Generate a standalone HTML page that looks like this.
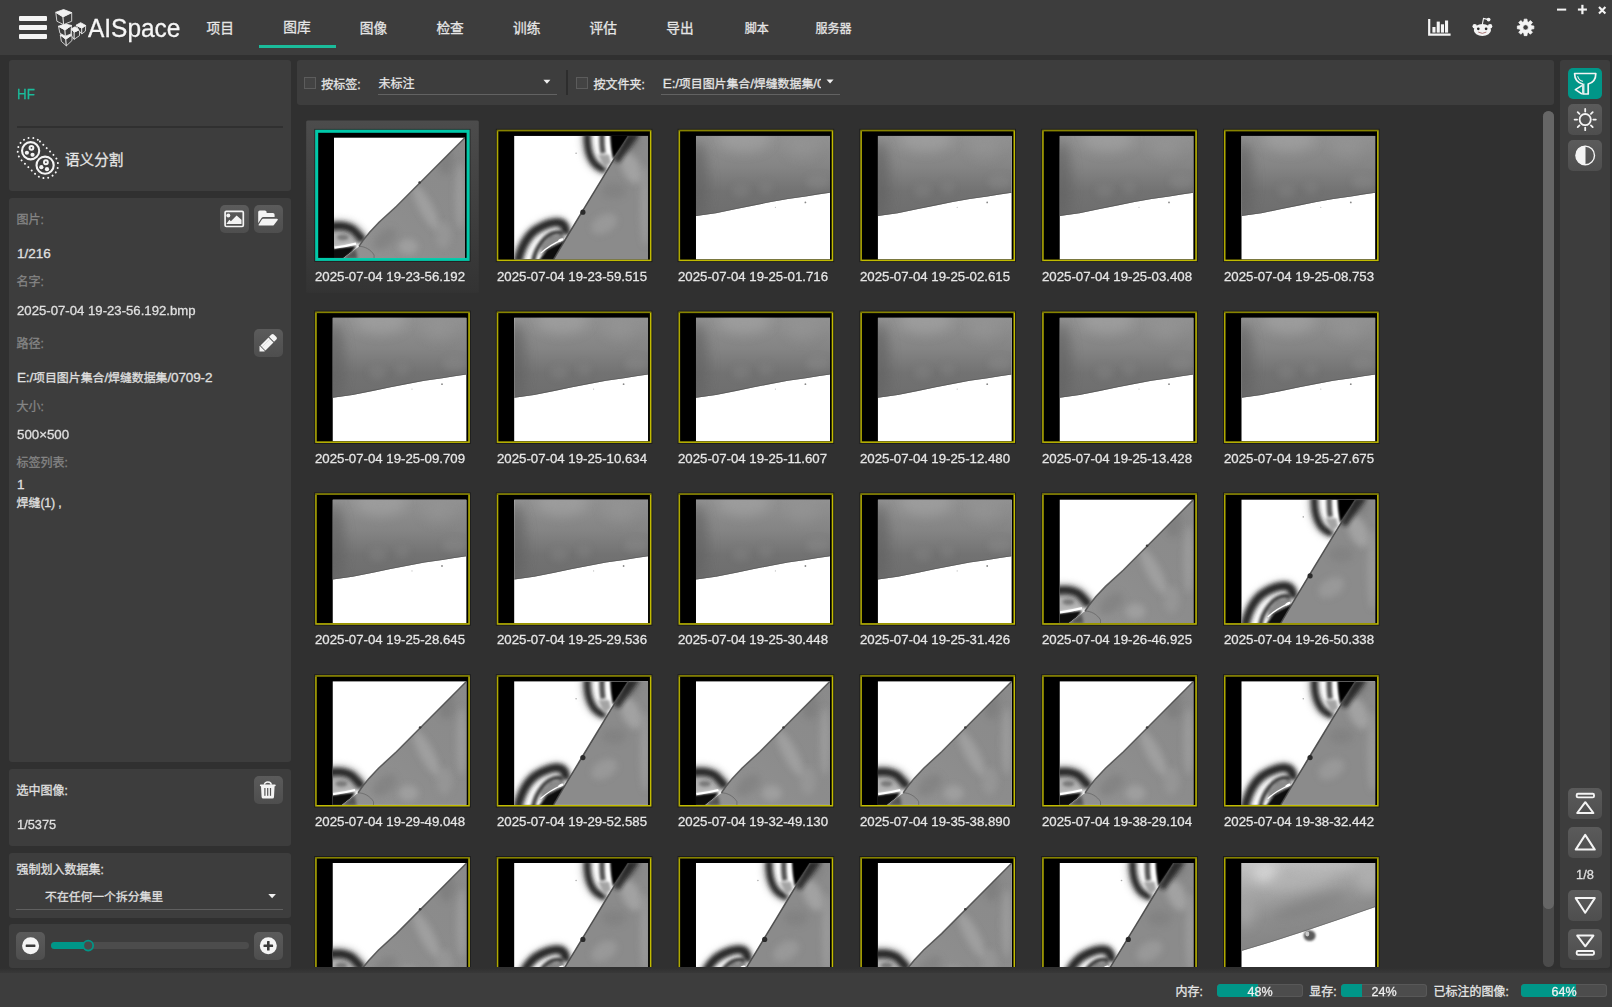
<!DOCTYPE html>
<html lang="zh-CN"><head><meta charset="utf-8"><title>AISpace</title>
<style>
*{box-sizing:border-box;margin:0;padding:0}
html,body{width:1612px;height:1007px;overflow:hidden;background:#303030}
body{position:relative;font-family:"Liberation Sans","Noto Sans CJK SC",sans-serif;color:#e0e0e0}
.a{position:absolute}
.pn{position:absolute;background:#3d3d3d;border-radius:3px}
.t{position:absolute;white-space:nowrap;transform-origin:0 50%;-webkit-text-stroke:.28px currentColor}
.btn{position:absolute;border-radius:5px;background:linear-gradient(#5b5b5b,#4e4e4e)}
.btn svg,.ico{position:absolute;left:0;top:0;overflow:visible}
.cb{position:absolute;width:12px;height:12px;border:1px solid #5c5c5c;background:#434343}
.bar{position:absolute;height:12.4px;border-radius:3.5px;background:#4c4c4c;overflow:hidden;box-shadow:inset 0 0 0 1px #585858}
.bar i{position:absolute;left:0;top:0;bottom:0;background:#009688;border-radius:3px 0 0 3px}
</style></head>
<body>
<div class="a" style="left:0;top:0;width:1612px;height:55px;background:#3d3d3d"></div>
<div class="a" style="left:18.8px;top:16px;width:27.8px;height:5px;border-radius:1px;background:#f4f4f4"></div>
<div class="a" style="left:18.8px;top:25px;width:27.8px;height:5px;border-radius:1px;background:#f4f4f4"></div>
<div class="a" style="left:18.8px;top:34px;width:27.8px;height:5px;border-radius:1px;background:#f4f4f4"></div>
<svg class="a" style="left:0;top:0" width="100" height="55" viewBox="0 0 100 55"><polygon points="60.25,34.94 65.83,39.13 66.39,45.83 61.37,41.36" fill="#3d3d3d" stroke="#f2f2f2" stroke-width="0.8" stroke-linejoin="round"/><polygon points="65.83,39.13 72.09,34.83 71.98,40.53 66.39,45.83" fill="#3d3d3d" stroke="#f2f2f2" stroke-width="0.8" stroke-linejoin="round"/><polygon points="60.25,34.94 66.39,32.99 72.09,34.83 65.83,39.13" fill="#f2f2f2" stroke="#f2f2f2" stroke-width="0.9" stroke-linejoin="round"/><polygon points="58.46,26.29 65.00,29.92 65.39,36.17 59.97,33.27" fill="#3d3d3d" stroke="#f2f2f2" stroke-width="0.8" stroke-linejoin="round"/><polygon points="65.00,29.92 71.53,25.45 70.97,33.94 65.39,36.17" fill="#3d3d3d" stroke="#f2f2f2" stroke-width="0.8" stroke-linejoin="round"/><polygon points="58.46,26.29 65.00,24.05 71.53,25.45 65.00,29.92" fill="#f2f2f2" stroke="#f2f2f2" stroke-width="0.9" stroke-linejoin="round"/><polygon points="71.42,28.80 74.21,32.15 74.21,39.30 71.70,36.06" fill="#3d3d3d" stroke="#f2f2f2" stroke-width="0.8" stroke-linejoin="round"/><polygon points="74.21,32.15 79.51,29.64 79.51,35.61 74.21,39.30" fill="#3d3d3d" stroke="#f2f2f2" stroke-width="0.8" stroke-linejoin="round"/><polygon points="71.42,28.80 75.05,26.85 79.51,29.64 74.21,32.15" fill="#f2f2f2" stroke="#f2f2f2" stroke-width="0.9" stroke-linejoin="round"/><polygon points="76.16,25.17 81.75,28.13 81.75,33.94 79.24,31.03" fill="#3d3d3d" stroke="#f2f2f2" stroke-width="0.8" stroke-linejoin="round"/><polygon points="81.75,28.13 85.66,25.45 85.38,31.15 81.75,33.94" fill="#3d3d3d" stroke="#f2f2f2" stroke-width="0.8" stroke-linejoin="round"/><polygon points="76.16,25.17 80.63,22.66 85.66,25.45 81.75,28.13" fill="#f2f2f2" stroke="#f2f2f2" stroke-width="0.9" stroke-linejoin="round"/><polygon points="55.78,12.33 63.04,16.80 63.60,24.61 56.90,21.26" fill="#3d3d3d" stroke="#f2f2f2" stroke-width="0.8" stroke-linejoin="round"/><polygon points="63.04,16.80 71.70,12.61 71.70,21.26 63.60,24.61" fill="#3d3d3d" stroke="#f2f2f2" stroke-width="0.8" stroke-linejoin="round"/><polygon points="55.78,12.33 63.60,9.54 71.70,12.61 63.04,16.80" fill="#f2f2f2" stroke="#f2f2f2" stroke-width="0.9" stroke-linejoin="round"/></svg>
<div class="t " style="top:10.60px;line-height:34px;height:34px;font-size:26px;color:#f6f6f6;left:88.00px;transform:scaleX(0.94);">AISpace</div>
<div class="t " style="top:18.50px;line-height:20px;height:20px;font-size:13.7px;color:#e6e6e6;left:70.30px;width:300px;text-align:center;transform-origin:50% 50%;">项目</div>
<div class="t " style="top:17.70px;line-height:20px;height:20px;font-size:13.7px;color:#e6e6e6;left:146.90px;width:300px;text-align:center;transform-origin:50% 50%;">图库</div>
<div class="t " style="top:18.50px;line-height:20px;height:20px;font-size:13.7px;color:#e6e6e6;left:223.50px;width:300px;text-align:center;transform-origin:50% 50%;">图像</div>
<div class="t " style="top:18.50px;line-height:20px;height:20px;font-size:13.7px;color:#e6e6e6;left:300.10px;width:300px;text-align:center;transform-origin:50% 50%;">检查</div>
<div class="t " style="top:18.50px;line-height:20px;height:20px;font-size:13.7px;color:#e6e6e6;left:376.70px;width:300px;text-align:center;transform-origin:50% 50%;">训练</div>
<div class="t " style="top:18.50px;line-height:20px;height:20px;font-size:13.7px;color:#e6e6e6;left:453.30px;width:300px;text-align:center;transform-origin:50% 50%;">评估</div>
<div class="t " style="top:18.50px;line-height:20px;height:20px;font-size:13.7px;color:#e6e6e6;left:529.90px;width:300px;text-align:center;transform-origin:50% 50%;">导出</div>
<div class="t " style="top:18.50px;line-height:20px;height:20px;font-size:12.0px;color:#e6e6e6;left:606.80px;width:300px;text-align:center;transform-origin:50% 50%;">脚本</div>
<div class="t " style="top:18.50px;line-height:20px;height:20px;font-size:12.0px;color:#e6e6e6;left:683.40px;width:300px;text-align:center;transform-origin:50% 50%;">服务器</div>
<div class="a" style="left:259.3px;top:44.5px;width:76.6px;height:3.5px;background:#1bbc9b"></div>
<svg class="a" style="left:1420px;top:0" width="192" height="55" viewBox="1420 0 192 55"><path d="M1428.1 18.9h2.2v14.7h20.3v2.1h-22.5z" fill="#f4f4f4"/><rect x="1432.4" y="27.0" width="3.1" height="5.6" fill="#f4f4f4"/><rect x="1436.7" y="21.6" width="3.1" height="11.0" fill="#f4f4f4"/><rect x="1440.9" y="24.3" width="3.1" height="8.3" fill="#f4f4f4"/><rect x="1445.0" y="20.5" width="3.1" height="12.1" fill="#f4f4f4"/><g fill="#f4f4f4"><ellipse cx="1482.4" cy="30" rx="8.6" ry="6.1"/><circle cx="1474.7" cy="26.2" r="2.2"/><circle cx="1490.1" cy="26.2" r="2.2"/><circle cx="1488.6" cy="19.6" r="1.9"/></g><path d="M1482.3 24.6 L1483.5 18.4 L1487.6 19.4" fill="none" stroke="#f4f4f4" stroke-width="1.1"/><circle cx="1478.3" cy="28.8" r="1.35" fill="#2a2a2a"/><circle cx="1486.1" cy="28.8" r="1.35" fill="#2a2a2a"/><path d="M1478.6 32.3 Q1482.4 34.6 1486.0 32.3" fill="none" stroke="#a77" stroke-width="1" stroke-linecap="round"/><path d="M1524.19,19.17 L1527.01,19.17 L1527.20,21.62 L1528.56,22.18 L1530.42,20.58 L1532.42,22.58 L1530.82,24.44 L1531.38,25.80 L1533.83,25.99 L1533.83,28.81 L1531.38,29.00 L1530.82,30.36 L1532.42,32.22 L1530.42,34.22 L1528.56,32.62 L1527.20,33.18 L1527.01,35.63 L1524.19,35.63 L1524.00,33.18 L1522.64,32.62 L1520.78,34.22 L1518.78,32.22 L1520.38,30.36 L1519.82,29.00 L1517.37,28.81 L1517.37,25.99 L1519.82,25.80 L1520.38,24.44 L1518.78,22.58 L1520.78,20.58 L1522.64,22.18 L1524.00,21.62Z M1528.3 27.4 a2.7 2.7 0 1 0 -5.4 0 a2.7 2.7 0 1 0 5.4 0Z" fill="#f4f4f4" fill-rule="evenodd" stroke="#f4f4f4" stroke-width="0.8" stroke-linejoin="round"/><rect x="1557" y="8.6" width="9.2" height="2" fill="#f4f4f4"/><rect x="1577.9" y="8.5" width="9" height="2.1" fill="#f4f4f4"/><rect x="1581.3" y="4.8" width="2.2" height="9.4" fill="#f4f4f4"/><path d="M1599 7 L1605.4 13.4 M1605.4 7 L1599 13.4" stroke="#f4f4f4" stroke-width="2.1" fill="none"/></svg>
<div class="pn" style="left:8.5px;top:60.3px;width:282.5px;height:130.9px"></div>
<div class="t " style="top:84.40px;line-height:20px;height:20px;font-size:15px;color:#1bbc9b;left:17.00px;transform:scaleX(0.89);">HF</div>
<div class="a" style="left:17px;top:125.6px;width:266px;height:2px;background:#303030"></div>
<svg class="a" style="left:0;top:130px" width="80" height="60" viewBox="0 130 80 60"><path d="M39.96 141.43 L54.42 155.86 A13.2 13.2 0 0 1 35.78 174.54 L21.32 160.11 A13.2 13.2 0 0 1 39.96 141.43Z" fill="none" stroke="#f4f4f4" stroke-width="2" stroke-linecap="round" stroke-dasharray="0.01 4.751"/><circle cx="30.64" cy="150.77" r="8.6" fill="none" stroke="#f4f4f4" stroke-width="2.1"/><circle cx="31.44" cy="147.82" r="1.9" fill="none" stroke="#f4f4f4" stroke-width="2"/><circle cx="26.89" cy="152.77" r="2.1" fill="#f4f4f4"/><circle cx="32.54" cy="154.77" r="2.1" fill="#f4f4f4"/><circle cx="45.1" cy="165.2" r="8.6" fill="none" stroke="#f4f4f4" stroke-width="2.1"/><circle cx="45.90" cy="162.25" r="1.9" fill="none" stroke="#f4f4f4" stroke-width="2"/><circle cx="41.35" cy="167.20" r="2.1" fill="#f4f4f4"/><circle cx="47.00" cy="169.20" r="2.1" fill="#f4f4f4"/></svg>
<div class="t " style="top:148.80px;line-height:22px;height:22px;font-size:14.6px;color:#e6e6e6;left:65.00px;">语义分割</div>
<div class="pn" style="left:8.5px;top:197.6px;width:282.5px;height:564.9px"></div>
<div class="t " style="top:210.00px;line-height:20px;height:20px;font-size:12px;color:#858585;left:16.60px;">图片:</div>
<div class="t " style="top:244.00px;line-height:20px;height:20px;font-size:13.5px;color:#e0e0e0;left:17.00px;">1/216</div>
<div class="t " style="top:271.50px;line-height:20px;height:20px;font-size:12px;color:#858585;left:16.60px;">名字:</div>
<div class="t " style="top:300.50px;line-height:20px;height:20px;font-size:13.5px;color:#e0e0e0;left:17.00px;transform:scaleX(0.975);">2025-07-04 19-23-56.192.bmp</div>
<div class="t " style="top:334.00px;line-height:20px;height:20px;font-size:12px;color:#858585;left:16.60px;">路径:</div>
<div class="t " style="top:368.20px;line-height:20px;height:20px;font-size:12px;color:#e0e0e0;left:17.00px;"><span style="font-size:13.5px;letter-spacing:-0.15px">E:/</span><span style="font-size:11.9px">项目图片集合</span><span style="font-size:13.5px;letter-spacing:-0.15px">/</span><span style="font-size:11.9px">焊缝数据集</span><span style="font-size:13.5px;letter-spacing:-0.15px">/0709-2</span></div>
<div class="t " style="top:396.70px;line-height:20px;height:20px;font-size:12px;color:#858585;left:16.60px;">大小:</div>
<div class="t " style="top:424.60px;line-height:20px;height:20px;font-size:13.5px;color:#e0e0e0;left:17.00px;transform:scaleX(0.985);">500×500</div>
<div class="t " style="top:453.00px;line-height:20px;height:20px;font-size:12px;color:#858585;left:16.60px;">标签列表:</div>
<div class="t " style="top:475.00px;line-height:20px;height:20px;font-size:13.5px;color:#e0e0e0;left:17.00px;">1</div>
<div class="t " style="top:493.00px;line-height:20px;height:20px;font-size:12px;color:#e0e0e0;left:16.60px;"><span style="font-size:11.9px">焊缝</span><span style="font-size:12.4px;letter-spacing:-0.2px">(1) ,</span></div>
<div class="btn" style="left:220px;top:205.2px;width:28.5px;height:27.6px;"><svg width="28.5" height="27.6" viewBox="220 205.2 28.5 27.6"><rect x="225.1" y="211.6" width="18.2" height="15.1" rx="1.2" fill="none" stroke="#f4f4f4" stroke-width="1.7"/><circle cx="228.3" cy="215.7" r="2" fill="#f4f4f4"/><path d="M226.3 224.2 L229.4 220 L230.9 221.5 L236.6 215.6 L241.5 220 L241.5 224.2Z" fill="#f4f4f4"/></svg></div>
<div class="btn" style="left:254.2px;top:205.2px;width:28.5px;height:27.6px;"><svg width="28.5" height="27.6" viewBox="254.2 205.2 28.5 27.6"><path d="M258.4 223.5 V212.3 a1.7 1.7 0 0 1 1.7 -1.7 h5 a1.7 1.7 0 0 1 1.7 1.7 v0.9 h6.3 a1.7 1.7 0 0 1 1.7 1.7 v2.4 h-11.2 a2.3 2.3 0 0 0 -1.9 1 Z" fill="#f4f4f4"/><path d="M263.6 218.9 h13.6 a0.9 0.9 0 0 1 0.7 1.4 l-3.6 4.6 a2.2 2.2 0 0 1 -1.7 0.9 h-13.2 a0.6 0.6 0 0 1 -0.5 -1 l3 -4.8 a2.2 2.2 0 0 1 1.7 -1.1Z" fill="#f4f4f4"/></svg></div>
<div class="btn" style="left:254.2px;top:329.3px;width:28.5px;height:27.6px;"><svg width="28.5" height="27.6" viewBox="254.2 329.3 28.5 27.6"><g transform="translate(259.7 351.7) rotate(-45)"><path d="M0 0 L3.5 -3.5 L4.1 -3.5 L4.1 3.5 L3.5 3.5Z" fill="#f4f4f4"/><path d="M4.9 -3.5 H16.2 V3.5 H4.9Z" fill="#f4f4f4"/><path d="M17.1 -3.5 H20.4 a1.7 1.7 0 0 1 1.7 1.7 V1.8 a1.7 1.7 0 0 1 -1.7 1.7 H17.1Z" fill="#f4f4f4"/><path d="M5.4 -1.3 H15.8" stroke="#c9c9c9" stroke-width=".5"/></g></svg></div>
<div class="pn" style="left:8.5px;top:768.6px;width:282.5px;height:77.5px"></div>
<div class="t " style="top:781.00px;line-height:20px;height:20px;font-size:12px;color:#e0e0e0;left:16.40px;">选中图像:</div>
<div class="t " style="top:815.30px;line-height:20px;height:20px;font-size:13.5px;color:#e0e0e0;left:17.00px;transform:scaleX(0.95);">1/5375</div>
<div class="btn" style="left:254.2px;top:776.4px;width:28.5px;height:27.6px;"><svg width="28.5" height="27.6" viewBox="254.2 776.4 28.5 27.6"><path d="M260.9 785.7 h14.2" stroke="#f4f4f4" stroke-width="1.7" stroke-linecap="round" fill="none"/><path d="M264.6 785.2 a3.4 2.9 0 0 1 6.8 0" stroke="#f4f4f4" stroke-width="1.5" fill="none"/><path d="M261.2 786.3 h13.6 l-0.6 11 a1.7 1.7 0 0 1 -1.7 1.6 h-9 a1.7 1.7 0 0 1 -1.7 -1.6Z" fill="#f4f4f4"/><rect x="264.5" y="788.4" width="1.2" height="7.8" fill="#555"/><rect x="267.29999999999995" y="788.4" width="1.2" height="7.8" fill="#555"/><rect x="270.09999999999997" y="788.4" width="1.2" height="7.8" fill="#555"/></svg></div>
<div class="pn" style="left:8.5px;top:852.7px;width:282.5px;height:65.5px"></div>
<div class="t " style="top:859.80px;line-height:20px;height:20px;font-size:12px;color:#e0e0e0;left:16.40px;">强制划入数据集:</div>
<div class="t " style="top:887.40px;line-height:20px;height:20px;font-size:11.8px;color:#e0e0e0;left:45.10px;">不在任何一个拆分集里</div>
<svg class="a" style="left:266px;top:892px" width="12" height="8"><path d="M2.3 1.9 h7.6 l-3.8 4.4Z" fill="#f0f0f0"/></svg>
<div class="a" style="left:16.4px;top:909.3px;width:266.2px;height:1px;background:#606060"></div>
<div class="pn" style="left:8.5px;top:924.4px;width:282.5px;height:43.2px"></div>
<div class="btn" style="left:16.4px;top:932.2px;width:28.5px;height:27.6px;"><svg width="28.5" height="27.6" viewBox="16.4 932.2 28.5 27.6"><circle cx="31" cy="946" r="8.5" fill="#f4f4f4"/><rect x="26.1" y="944.7" width="9.7" height="2.6" rx="0.6" fill="#3a3a3a"/></svg></div>
<div class="btn" style="left:254.2px;top:932.2px;width:28.5px;height:27.6px;"><svg width="28.5" height="27.6" viewBox="254.2 932.2 28.5 27.6"><circle cx="268.5" cy="946" r="8.5" fill="#f4f4f4"/><rect x="263.7" y="944.7" width="9.6" height="2.6" rx="0.6" fill="#3a3a3a"/><rect x="267.2" y="941.2" width="2.6" height="9.6" rx="0.6" fill="#3a3a3a"/></svg></div>
<div class="a" style="left:50.5px;top:942.2px;width:198.3px;height:7px;border-radius:3.5px;background:#4c4c4c"></div>
<div class="a" style="left:50.5px;top:942.2px;width:38px;height:7px;border-radius:3.5px;background:#009688"></div>
<svg class="a" style="left:78px;top:936px" width="20" height="20" viewBox="78 936 20 20"><circle cx="88.2" cy="945.6" r="4.95" fill="#4a4a4a" stroke="#009688" stroke-width="1.8"/></svg>
<div class="pn" style="left:296.8px;top:60.3px;width:1257.5px;height:44.7px"></div>
<div class="cb" style="left:304.3px;top:77px"></div>
<div class="t " style="top:74.60px;line-height:20px;height:20px;font-size:12px;color:#e6e6e6;left:321.30px;">按标签:</div>
<div class="t " style="top:74.00px;line-height:20px;height:20px;font-size:12px;color:#e6e6e6;left:378.50px;">未标注</div>
<svg class="a" style="left:541px;top:78px" width="12" height="8"><path d="M2.4 1.7 h7 l-3.5 4Z" fill="#f0f0f0"/></svg>
<div class="a" style="left:377.8px;top:94px;width:179px;height:1px;background:#626262"></div>
<div class="a" style="left:565.7px;top:70.3px;width:2px;height:24.6px;background:#2d2d2d"></div>
<div class="cb" style="left:576.2px;top:77px"></div>
<div class="t " style="top:74.60px;line-height:20px;height:20px;font-size:12px;color:#e6e6e6;left:593.40px;">按文件夹:</div>
<div class="a" style="left:662.5px;top:70px;width:158.3px;height:24px;overflow:hidden"><div class="t" style="left:0.3px;top:4.1px;line-height:20px;font-size:12px;color:#e6e6e6"><span style="font-size:13.5px;letter-spacing:-0.15px">E:/</span><span style="font-size:11.9px">项目图片集合</span><span style="font-size:13.5px;letter-spacing:-0.15px">/</span><span style="font-size:11.9px">焊缝数据集</span><span style="font-size:13.5px;letter-spacing:-0.15px">/0709-2</span></div></div>
<svg class="a" style="left:824px;top:78px" width="12" height="8"><path d="M2.5 1.6 h7.1 l-3.55 4Z" fill="#f0f0f0"/></svg>
<div class="a" style="left:661.4px;top:94px;width:178.8px;height:1px;background:#626262"></div>
<svg class="a" style="left:297px;top:111px" width="1246" height="856" viewBox="297 111 1246 856"><defs><filter id="f05" filterUnits="userSpaceOnUse" x="-30" y="-30" width="200" height="190"><feGaussianBlur stdDeviation="0.5"/></filter><filter id="f1" filterUnits="userSpaceOnUse" x="-30" y="-30" width="200" height="190"><feGaussianBlur stdDeviation="1.0"/></filter><filter id="f15" filterUnits="userSpaceOnUse" x="-30" y="-30" width="200" height="190"><feGaussianBlur stdDeviation="1.6"/></filter><filter id="f2" filterUnits="userSpaceOnUse" x="-30" y="-30" width="200" height="190"><feGaussianBlur stdDeviation="2.2"/></filter><filter id="f3" filterUnits="userSpaceOnUse" x="-30" y="-30" width="200" height="190"><feGaussianBlur stdDeviation="3.2"/></filter><filter id="f6" filterUnits="userSpaceOnUse" x="-30" y="-30" width="200" height="190"><feGaussianBlur stdDeviation="6"/></filter><filter id="f9" filterUnits="userSpaceOnUse" x="-30" y="-30" width="200" height="190"><feGaussianBlur stdDeviation="9"/></filter><clipPath id="ci"><rect x="0" y="0" width="134.1" height="123.7"/></clipPath><linearGradient id="gC" x1="0" y1="0" x2="0" y2="1"><stop offset="0" stop-color="#929292"/><stop offset=".35" stop-color="#848484"/><stop offset=".62" stop-color="#727272"/><stop offset="1" stop-color="#6c6c6c"/></linearGradient><linearGradient id="gD" x1="0" y1="0" x2="0.25" y2="1"><stop offset="0" stop-color="#c6c6c6"/><stop offset=".3" stop-color="#a8a8a8"/><stop offset=".6" stop-color="#8e8e8e"/><stop offset="1" stop-color="#808080"/></linearGradient><linearGradient id="gA" x1="1" y1="0" x2="0" y2="1"><stop offset="0" stop-color="#8a8a8a"/><stop offset=".5" stop-color="#8c8c8c"/><stop offset="1" stop-color="#939393"/></linearGradient><linearGradient id="gSel" x1="0" y1="0" x2="0" y2="1"><stop offset="0" stop-color="#4c4c4c"/><stop offset="1" stop-color="#333"/></linearGradient><clipPath id="cC"><polygon points="0,0 0,80.2 20,77.4 40.3,73.3 58,69.6 75,66.3 92,63.2 109.8,60.7 122,58.6 134.1,56.9 134.1,0"/></clipPath><g id="tC"><rect width="134.1" height="123.7" fill="#fff"/><g clip-path="url(#cC)"><rect width="134.1" height="90" fill="url(#gC)"/><ellipse cx="48" cy="3" rx="26" ry="13" fill="#a0a0a0" opacity=".75" filter="url(#f6)"/><ellipse cx="106" cy="10" rx="16" ry="12" fill="#959595" opacity=".6" filter="url(#f6)"/><ellipse cx="2" cy="45" rx="10" ry="40" fill="#626262" opacity=".7" filter="url(#f6)"/><ellipse cx="122" cy="46" rx="12" ry="7" fill="#8a8a8a" opacity=".45" filter="url(#f3)"/><ellipse cx="45" cy="55" rx="9" ry="7" fill="#858585" opacity=".4" filter="url(#f3)"/><ellipse cx="70" cy="52" rx="7" ry="7" fill="#848484" opacity=".4" filter="url(#f3)"/><polyline points="0,80.2 20,77.4 40.3,73.3 58,69.6 75,66.3 92,63.2 109.8,60.7 122,58.6 134.1,56.9" fill="none" stroke="#505050" stroke-width="1.6" filter="url(#f05)" opacity=".65"/></g><circle cx="109.5" cy="66.6" r="0.9" fill="#888"/><circle cx="79.5" cy="71.5" r="0.6" fill="#bbb"/></g><clipPath id="cD"><polygon points="0,0 0,87.9 30,78.9 61,69.1 95,57.6 134.1,44.1 134.1,0"/></clipPath><g id="tD"><rect width="134.1" height="123.7" fill="#fff"/><g clip-path="url(#cD)"><rect width="134.1" height="95" fill="url(#gD)"/><ellipse cx="24" cy="10" rx="13" ry="10" fill="#d8d8d8" opacity=".85" filter="url(#f6)"/><ellipse cx="60" cy="16" rx="34" ry="9" fill="#b6b6b6" opacity=".7" filter="url(#f6)" transform="rotate(-10 60 16)"/><ellipse cx="84" cy="0" rx="34" ry="8" fill="#bebebe" opacity=".7" filter="url(#f6)"/><ellipse cx="128" cy="14" rx="12" ry="16" fill="#b2b2b2" opacity=".7" filter="url(#f6)"/><ellipse cx="4" cy="50" rx="9" ry="14" fill="#a8a8a8" opacity=".7" filter="url(#f6)"/><ellipse cx="70" cy="42" rx="40" ry="7" fill="#7c7c7c" opacity=".6" filter="url(#f6)" transform="rotate(-17 70 42)"/><polyline points="0,87.9 30,78.9 61,69.1 95,57.6 134.1,44.1" fill="none" stroke="#585858" stroke-width="1.6" filter="url(#f05)" opacity=".6"/></g><ellipse cx="68.3" cy="72.6" rx="6" ry="5.4" fill="#5a5a5a" filter="url(#f1)"/><ellipse cx="66" cy="71" rx="2" ry="2.4" fill="#c8c8c8" filter="url(#f05)"/></g><clipPath id="cA"><polygon points="134.1,0 63.9,70.6 46,87 36.4,97.2 29.6,105.8 25.5,111.7 16.6,118.4 9.4,123.7 134.1,123.7"/></clipPath><clipPath id="cAw"><polygon points="0,0 134.1,0 63.9,70.6 46,87 36.4,97.2 29.6,105.8 25.5,111.7 16.6,118.4 9.4,123.7 0,123.7"/></clipPath><g id="tA"><rect width="134.1" height="123.7" fill="#fff"/><g clip-path="url(#cAw)"><path d="M-3 93 Q12 91 24 102 L27 108 L-3 113Z" fill="#b4b4b4" filter="url(#f15)"/><ellipse cx="9" cy="102.5" rx="6" ry="3" fill="#6c6c6c" filter="url(#f15)" opacity=".8"/><path d="M-4 90 C6 88.5 16 89.5 22 94.5 C26 98 28 101 31 105" fill="none" stroke="#9a9a9a" stroke-width="12" filter="url(#f3)" opacity=".55"/><path d="M-4 91.3 C6 90 15 90.6 20.5 95.5 C24 98.8 26.5 102 30 106" fill="none" stroke="#262626" stroke-width="8.4" filter="url(#f2)"/><path d="M-3 114.2 Q8 112.6 23 111 L18 118.2 L10 125 L-3 125Z" fill="#0a0a0a" filter="url(#f1)"/><path d="M0.5 112.9 Q12 111.6 22.5 108.8" fill="none" stroke="#fff" stroke-width="2.3" filter="url(#f05)"/></g><g clip-path="url(#cA)"><rect width="134.1" height="123.7" fill="url(#gA)"/><ellipse cx="94" cy="72" rx="7" ry="26" fill="#a6a6a6" opacity=".75" filter="url(#f3)" transform="rotate(-28 94 72)"/><ellipse cx="76" cy="112" rx="10" ry="8" fill="#a4a4a4" opacity=".75" filter="url(#f3)"/><ellipse cx="129" cy="60" rx="5" ry="34" fill="#a2a2a2" opacity=".7" filter="url(#f3)"/><ellipse cx="114" cy="24" rx="8" ry="14" fill="#7c7c7c" opacity=".7" filter="url(#f3)"/><ellipse cx="112" cy="100" rx="8" ry="14" fill="#9c9c9c" opacity=".6" filter="url(#f3)"/><ellipse cx="52" cy="104" rx="14" ry="8" fill="#808080" opacity=".7" filter="url(#f3)" transform="rotate(-40 52 104)"/><path d="M22 114 L10 124 L24 124Z" fill="#444" filter="url(#f15)" opacity=".8"/><path d="M25.5 111.7 C31 111.4 38 115 41 120.5 L41 123.7" fill="none" stroke="#5a5a5a" stroke-width=".6"/></g><polyline points="134.1,0 63.9,70.6 46,87 36.4,97.2 29.6,105.8 25.5,111.7" fill="none" stroke="#4a4a4a" stroke-width="1.5" filter="url(#f05)" opacity=".85"/><circle cx="87.6" cy="46.3" r="1.3" fill="#3a3a3a" filter="url(#f05)"/></g><clipPath id="cB"><polygon points="114.4,0 100,23.2 91.6,37 80.8,54.8 67.4,76.8 50.3,105.2 39.4,123.7 134.1,123.7 134.1,0"/></clipPath><clipPath id="cBw"><polygon points="0,0 114.4,0 100,23.2 91.6,37 80.8,54.8 67.4,76.8 50.3,105.2 39.4,123.7 0,123.7"/></clipPath><g id="tB"><rect width="134.1" height="123.7" fill="#fff"/><g clip-path="url(#cBw)"><path d="M71.5 -3 C71 10 73 20 79 27.5 C83 32 87 34 92 35" fill="none" stroke="#a8a8a8" stroke-width="11" filter="url(#f3)" opacity=".55"/><path d="M73.1 -3 C72.6 9 74.2 19 79.4 26.4 C83 31 87 33.2 91.5 34" fill="none" stroke="#262626" stroke-width="7" filter="url(#f2)"/><path d="M84 19 L95 18.5 L97 27 L90 32Z" fill="#a4a4a4" filter="url(#f15)"/><path d="M88 -3 C87.6 5 87.8 11 89 17.5" fill="none" stroke="#505050" stroke-width="5.4" filter="url(#f15)"/><path d="M96 -2 L117 -2 L99 24 C97.5 17 96.3 9 96 -2Z" fill="#060606" filter="url(#f1)"/><path d="M93.3 -1 C93.3 6 93.8 12 94.8 18.5" fill="none" stroke="#fff" stroke-width="1.5" filter="url(#f1)" opacity=".85"/><path d="M2.8 127 C7 109 13 99.5 22 93.5 C30 88.3 40 84.6 46 86.3 C51 88 52.8 93 51.4 99" fill="none" stroke="#a0a0a0" stroke-width="11" filter="url(#f3)" opacity=".5"/><path d="M27 110 L36 100 L48 98 L51 102 L26 120Z" fill="#8a8a8a" filter="url(#f15)"/><path d="M3.4 127 C7.5 109 13.5 100 22 94 C30 88.8 40 85.4 46 87 C50.6 88.6 52.4 93 51.2 98.7" fill="none" stroke="#262626" stroke-width="8.4" filter="url(#f2)"/><path d="M18.8 127 C20 118 23.5 111.5 27.8 106.1 C30.5 102.6 35.2 98.9 38.5 97.6 C42.6 96.1 46 96.4 49 97.6" fill="none" stroke="#3a3a3a" stroke-width="4.4" filter="url(#f15)"/><path d="M24.6 125 L32.7 113.7 L49.5 104.9 L52.5 105.3 L41 125Z" fill="#070707" filter="url(#f1)"/><path d="M26.4 117.6 Q35 109.5 48.4 103.8" fill="none" stroke="#fff" stroke-width="1.3" filter="url(#f05)"/><ellipse cx="46.6" cy="104.2" rx="2.8" ry="1.3" fill="#fff" transform="rotate(-26 46.6 104.2)"/></g><g clip-path="url(#cB)"><rect width="134.1" height="123.7" fill="#8b8b8b"/><ellipse cx="117" cy="32" rx="9" ry="17" fill="#a8a8a8" opacity=".8" filter="url(#f3)" transform="rotate(-25 117 32)"/><ellipse cx="90" cy="88" rx="14" ry="9" fill="#9c9c9c" opacity=".8" filter="url(#f3)" transform="rotate(-30 90 88)"/><ellipse cx="131" cy="70" rx="5" ry="40" fill="#a0a0a0" opacity=".7" filter="url(#f3)"/><ellipse cx="100" cy="55" rx="12" ry="8" fill="#808080" opacity=".7" filter="url(#f3)"/><ellipse cx="117" cy="6" rx="9" ry="8" fill="#787878" opacity=".8" filter="url(#f3)"/><path d="M113 -2 L126 -2 L105 27 L99 24Z" fill="#1c1c1c" filter="url(#f2)" opacity=".85"/></g><polyline points="114.4,0 100,23.2 91.6,37 80.8,54.8 67.4,76.8 50.3,105.2 39.4,123.7" fill="none" stroke="#444" stroke-width="1.5" filter="url(#f05)" opacity=".9"/><circle cx="68.8" cy="76.4" r="2.6" fill="#2a2a2a" filter="url(#f05)"/><circle cx="62" cy="17.5" r="0.8" fill="#aaa"/></g></defs><rect x="306.2" y="120.4" width="172.6" height="172.4" rx="1.5" fill="url(#gSel)"/><rect x="314.80" y="129.40" width="155.20" height="131.90" fill="none" stroke="#000" stroke-opacity=".45" stroke-width="1"/><rect x="316.70" y="131.30" width="151.40" height="128.10" fill="#000" stroke="#00c9a9" stroke-width="3"/><g transform="translate(334.00 137.40) scale(0.9775 0.976)" clip-path="url(#ci)"><use href="#tA"/></g><rect x="496.30" y="129.30" width="155.60" height="132.30" fill="none" stroke="#000" stroke-opacity=".4" stroke-width="1"/><rect x="497.55" y="130.55" width="153.10" height="129.80" fill="#000" stroke="#c2bc00" stroke-width="1.5"/><path d="M496.80 130.55 H651.40" stroke="#000" stroke-opacity=".3" stroke-width="1.5"/><path d="M497.55 129.80 V261.10" stroke="#000" stroke-opacity=".1" stroke-width="1.5"/><g transform="translate(514.10 135.80)" clip-path="url(#ci)"><use href="#tB"/></g><rect x="678.10" y="129.30" width="155.60" height="132.30" fill="none" stroke="#000" stroke-opacity=".4" stroke-width="1"/><rect x="679.35" y="130.55" width="153.10" height="129.80" fill="#000" stroke="#c2bc00" stroke-width="1.5"/><path d="M678.60 130.55 H833.20" stroke="#000" stroke-opacity=".3" stroke-width="1.5"/><path d="M679.35 129.80 V261.10" stroke="#000" stroke-opacity=".1" stroke-width="1.5"/><g transform="translate(695.90 135.80)" clip-path="url(#ci)"><use href="#tC"/></g><rect x="859.90" y="129.30" width="155.60" height="132.30" fill="none" stroke="#000" stroke-opacity=".4" stroke-width="1"/><rect x="861.15" y="130.55" width="153.10" height="129.80" fill="#000" stroke="#c2bc00" stroke-width="1.5"/><path d="M860.40 130.55 H1015.00" stroke="#000" stroke-opacity=".3" stroke-width="1.5"/><path d="M861.15 129.80 V261.10" stroke="#000" stroke-opacity=".1" stroke-width="1.5"/><g transform="translate(877.70 135.80)" clip-path="url(#ci)"><use href="#tC"/></g><rect x="1041.70" y="129.30" width="155.60" height="132.30" fill="none" stroke="#000" stroke-opacity=".4" stroke-width="1"/><rect x="1042.95" y="130.55" width="153.10" height="129.80" fill="#000" stroke="#c2bc00" stroke-width="1.5"/><path d="M1042.20 130.55 H1196.80" stroke="#000" stroke-opacity=".3" stroke-width="1.5"/><path d="M1042.95 129.80 V261.10" stroke="#000" stroke-opacity=".1" stroke-width="1.5"/><g transform="translate(1059.50 135.80)" clip-path="url(#ci)"><use href="#tC"/></g><rect x="1223.50" y="129.30" width="155.60" height="132.30" fill="none" stroke="#000" stroke-opacity=".4" stroke-width="1"/><rect x="1224.75" y="130.55" width="153.10" height="129.80" fill="#000" stroke="#c2bc00" stroke-width="1.5"/><path d="M1224.00 130.55 H1378.60" stroke="#000" stroke-opacity=".3" stroke-width="1.5"/><path d="M1224.75 129.80 V261.10" stroke="#000" stroke-opacity=".1" stroke-width="1.5"/><g transform="translate(1241.30 135.80)" clip-path="url(#ci)"><use href="#tC"/></g><rect x="314.70" y="311.10" width="155.60" height="132.30" fill="none" stroke="#000" stroke-opacity=".4" stroke-width="1"/><rect x="315.95" y="312.35" width="153.10" height="129.80" fill="#000" stroke="#c2bc00" stroke-width="1.5"/><path d="M315.20 312.35 H469.80" stroke="#000" stroke-opacity=".3" stroke-width="1.5"/><path d="M315.95 311.60 V442.90" stroke="#000" stroke-opacity=".1" stroke-width="1.5"/><g transform="translate(332.50 317.60)" clip-path="url(#ci)"><use href="#tC"/></g><rect x="496.30" y="311.10" width="155.60" height="132.30" fill="none" stroke="#000" stroke-opacity=".4" stroke-width="1"/><rect x="497.55" y="312.35" width="153.10" height="129.80" fill="#000" stroke="#c2bc00" stroke-width="1.5"/><path d="M496.80 312.35 H651.40" stroke="#000" stroke-opacity=".3" stroke-width="1.5"/><path d="M497.55 311.60 V442.90" stroke="#000" stroke-opacity=".1" stroke-width="1.5"/><g transform="translate(514.10 317.60)" clip-path="url(#ci)"><use href="#tC"/></g><rect x="678.10" y="311.10" width="155.60" height="132.30" fill="none" stroke="#000" stroke-opacity=".4" stroke-width="1"/><rect x="679.35" y="312.35" width="153.10" height="129.80" fill="#000" stroke="#c2bc00" stroke-width="1.5"/><path d="M678.60 312.35 H833.20" stroke="#000" stroke-opacity=".3" stroke-width="1.5"/><path d="M679.35 311.60 V442.90" stroke="#000" stroke-opacity=".1" stroke-width="1.5"/><g transform="translate(695.90 317.60)" clip-path="url(#ci)"><use href="#tC"/></g><rect x="859.90" y="311.10" width="155.60" height="132.30" fill="none" stroke="#000" stroke-opacity=".4" stroke-width="1"/><rect x="861.15" y="312.35" width="153.10" height="129.80" fill="#000" stroke="#c2bc00" stroke-width="1.5"/><path d="M860.40 312.35 H1015.00" stroke="#000" stroke-opacity=".3" stroke-width="1.5"/><path d="M861.15 311.60 V442.90" stroke="#000" stroke-opacity=".1" stroke-width="1.5"/><g transform="translate(877.70 317.60)" clip-path="url(#ci)"><use href="#tC"/></g><rect x="1041.70" y="311.10" width="155.60" height="132.30" fill="none" stroke="#000" stroke-opacity=".4" stroke-width="1"/><rect x="1042.95" y="312.35" width="153.10" height="129.80" fill="#000" stroke="#c2bc00" stroke-width="1.5"/><path d="M1042.20 312.35 H1196.80" stroke="#000" stroke-opacity=".3" stroke-width="1.5"/><path d="M1042.95 311.60 V442.90" stroke="#000" stroke-opacity=".1" stroke-width="1.5"/><g transform="translate(1059.50 317.60)" clip-path="url(#ci)"><use href="#tC"/></g><rect x="1223.50" y="311.10" width="155.60" height="132.30" fill="none" stroke="#000" stroke-opacity=".4" stroke-width="1"/><rect x="1224.75" y="312.35" width="153.10" height="129.80" fill="#000" stroke="#c2bc00" stroke-width="1.5"/><path d="M1224.00 312.35 H1378.60" stroke="#000" stroke-opacity=".3" stroke-width="1.5"/><path d="M1224.75 311.60 V442.90" stroke="#000" stroke-opacity=".1" stroke-width="1.5"/><g transform="translate(1241.30 317.60)" clip-path="url(#ci)"><use href="#tC"/></g><rect x="314.70" y="492.90" width="155.60" height="132.30" fill="none" stroke="#000" stroke-opacity=".4" stroke-width="1"/><rect x="315.95" y="494.15" width="153.10" height="129.80" fill="#000" stroke="#c2bc00" stroke-width="1.5"/><path d="M315.20 494.15 H469.80" stroke="#000" stroke-opacity=".3" stroke-width="1.5"/><path d="M315.95 493.40 V624.70" stroke="#000" stroke-opacity=".1" stroke-width="1.5"/><g transform="translate(332.50 499.40)" clip-path="url(#ci)"><use href="#tC"/></g><rect x="496.30" y="492.90" width="155.60" height="132.30" fill="none" stroke="#000" stroke-opacity=".4" stroke-width="1"/><rect x="497.55" y="494.15" width="153.10" height="129.80" fill="#000" stroke="#c2bc00" stroke-width="1.5"/><path d="M496.80 494.15 H651.40" stroke="#000" stroke-opacity=".3" stroke-width="1.5"/><path d="M497.55 493.40 V624.70" stroke="#000" stroke-opacity=".1" stroke-width="1.5"/><g transform="translate(514.10 499.40)" clip-path="url(#ci)"><use href="#tC"/></g><rect x="678.10" y="492.90" width="155.60" height="132.30" fill="none" stroke="#000" stroke-opacity=".4" stroke-width="1"/><rect x="679.35" y="494.15" width="153.10" height="129.80" fill="#000" stroke="#c2bc00" stroke-width="1.5"/><path d="M678.60 494.15 H833.20" stroke="#000" stroke-opacity=".3" stroke-width="1.5"/><path d="M679.35 493.40 V624.70" stroke="#000" stroke-opacity=".1" stroke-width="1.5"/><g transform="translate(695.90 499.40)" clip-path="url(#ci)"><use href="#tC"/></g><rect x="859.90" y="492.90" width="155.60" height="132.30" fill="none" stroke="#000" stroke-opacity=".4" stroke-width="1"/><rect x="861.15" y="494.15" width="153.10" height="129.80" fill="#000" stroke="#c2bc00" stroke-width="1.5"/><path d="M860.40 494.15 H1015.00" stroke="#000" stroke-opacity=".3" stroke-width="1.5"/><path d="M861.15 493.40 V624.70" stroke="#000" stroke-opacity=".1" stroke-width="1.5"/><g transform="translate(877.70 499.40)" clip-path="url(#ci)"><use href="#tC"/></g><rect x="1041.70" y="492.90" width="155.60" height="132.30" fill="none" stroke="#000" stroke-opacity=".4" stroke-width="1"/><rect x="1042.95" y="494.15" width="153.10" height="129.80" fill="#000" stroke="#c2bc00" stroke-width="1.5"/><path d="M1042.20 494.15 H1196.80" stroke="#000" stroke-opacity=".3" stroke-width="1.5"/><path d="M1042.95 493.40 V624.70" stroke="#000" stroke-opacity=".1" stroke-width="1.5"/><g transform="translate(1059.50 499.40)" clip-path="url(#ci)"><use href="#tA"/></g><rect x="1223.50" y="492.90" width="155.60" height="132.30" fill="none" stroke="#000" stroke-opacity=".4" stroke-width="1"/><rect x="1224.75" y="494.15" width="153.10" height="129.80" fill="#000" stroke="#c2bc00" stroke-width="1.5"/><path d="M1224.00 494.15 H1378.60" stroke="#000" stroke-opacity=".3" stroke-width="1.5"/><path d="M1224.75 493.40 V624.70" stroke="#000" stroke-opacity=".1" stroke-width="1.5"/><g transform="translate(1241.30 499.40)" clip-path="url(#ci)"><use href="#tB"/></g><rect x="314.70" y="674.70" width="155.60" height="132.30" fill="none" stroke="#000" stroke-opacity=".4" stroke-width="1"/><rect x="315.95" y="675.95" width="153.10" height="129.80" fill="#000" stroke="#c2bc00" stroke-width="1.5"/><path d="M315.20 675.95 H469.80" stroke="#000" stroke-opacity=".3" stroke-width="1.5"/><path d="M315.95 675.20 V806.50" stroke="#000" stroke-opacity=".1" stroke-width="1.5"/><g transform="translate(332.50 681.20)" clip-path="url(#ci)"><use href="#tA"/></g><rect x="496.30" y="674.70" width="155.60" height="132.30" fill="none" stroke="#000" stroke-opacity=".4" stroke-width="1"/><rect x="497.55" y="675.95" width="153.10" height="129.80" fill="#000" stroke="#c2bc00" stroke-width="1.5"/><path d="M496.80 675.95 H651.40" stroke="#000" stroke-opacity=".3" stroke-width="1.5"/><path d="M497.55 675.20 V806.50" stroke="#000" stroke-opacity=".1" stroke-width="1.5"/><g transform="translate(514.10 681.20)" clip-path="url(#ci)"><use href="#tB"/></g><rect x="678.10" y="674.70" width="155.60" height="132.30" fill="none" stroke="#000" stroke-opacity=".4" stroke-width="1"/><rect x="679.35" y="675.95" width="153.10" height="129.80" fill="#000" stroke="#c2bc00" stroke-width="1.5"/><path d="M678.60 675.95 H833.20" stroke="#000" stroke-opacity=".3" stroke-width="1.5"/><path d="M679.35 675.20 V806.50" stroke="#000" stroke-opacity=".1" stroke-width="1.5"/><g transform="translate(695.90 681.20)" clip-path="url(#ci)"><use href="#tA"/></g><rect x="859.90" y="674.70" width="155.60" height="132.30" fill="none" stroke="#000" stroke-opacity=".4" stroke-width="1"/><rect x="861.15" y="675.95" width="153.10" height="129.80" fill="#000" stroke="#c2bc00" stroke-width="1.5"/><path d="M860.40 675.95 H1015.00" stroke="#000" stroke-opacity=".3" stroke-width="1.5"/><path d="M861.15 675.20 V806.50" stroke="#000" stroke-opacity=".1" stroke-width="1.5"/><g transform="translate(877.70 681.20)" clip-path="url(#ci)"><use href="#tA"/></g><rect x="1041.70" y="674.70" width="155.60" height="132.30" fill="none" stroke="#000" stroke-opacity=".4" stroke-width="1"/><rect x="1042.95" y="675.95" width="153.10" height="129.80" fill="#000" stroke="#c2bc00" stroke-width="1.5"/><path d="M1042.20 675.95 H1196.80" stroke="#000" stroke-opacity=".3" stroke-width="1.5"/><path d="M1042.95 675.20 V806.50" stroke="#000" stroke-opacity=".1" stroke-width="1.5"/><g transform="translate(1059.50 681.20)" clip-path="url(#ci)"><use href="#tA"/></g><rect x="1223.50" y="674.70" width="155.60" height="132.30" fill="none" stroke="#000" stroke-opacity=".4" stroke-width="1"/><rect x="1224.75" y="675.95" width="153.10" height="129.80" fill="#000" stroke="#c2bc00" stroke-width="1.5"/><path d="M1224.00 675.95 H1378.60" stroke="#000" stroke-opacity=".3" stroke-width="1.5"/><path d="M1224.75 675.20 V806.50" stroke="#000" stroke-opacity=".1" stroke-width="1.5"/><g transform="translate(1241.30 681.20)" clip-path="url(#ci)"><use href="#tB"/></g><rect x="314.70" y="856.50" width="155.60" height="132.30" fill="none" stroke="#000" stroke-opacity=".4" stroke-width="1"/><rect x="315.95" y="857.75" width="153.10" height="129.80" fill="#000" stroke="#c2bc00" stroke-width="1.5"/><path d="M315.20 857.75 H469.80" stroke="#000" stroke-opacity=".3" stroke-width="1.5"/><path d="M315.95 857.00 V988.30" stroke="#000" stroke-opacity=".1" stroke-width="1.5"/><g transform="translate(332.50 863.00)" clip-path="url(#ci)"><use href="#tA"/></g><rect x="496.30" y="856.50" width="155.60" height="132.30" fill="none" stroke="#000" stroke-opacity=".4" stroke-width="1"/><rect x="497.55" y="857.75" width="153.10" height="129.80" fill="#000" stroke="#c2bc00" stroke-width="1.5"/><path d="M496.80 857.75 H651.40" stroke="#000" stroke-opacity=".3" stroke-width="1.5"/><path d="M497.55 857.00 V988.30" stroke="#000" stroke-opacity=".1" stroke-width="1.5"/><g transform="translate(514.10 863.00)" clip-path="url(#ci)"><use href="#tB"/></g><rect x="678.10" y="856.50" width="155.60" height="132.30" fill="none" stroke="#000" stroke-opacity=".4" stroke-width="1"/><rect x="679.35" y="857.75" width="153.10" height="129.80" fill="#000" stroke="#c2bc00" stroke-width="1.5"/><path d="M678.60 857.75 H833.20" stroke="#000" stroke-opacity=".3" stroke-width="1.5"/><path d="M679.35 857.00 V988.30" stroke="#000" stroke-opacity=".1" stroke-width="1.5"/><g transform="translate(695.90 863.00)" clip-path="url(#ci)"><use href="#tB"/></g><rect x="859.90" y="856.50" width="155.60" height="132.30" fill="none" stroke="#000" stroke-opacity=".4" stroke-width="1"/><rect x="861.15" y="857.75" width="153.10" height="129.80" fill="#000" stroke="#c2bc00" stroke-width="1.5"/><path d="M860.40 857.75 H1015.00" stroke="#000" stroke-opacity=".3" stroke-width="1.5"/><path d="M861.15 857.00 V988.30" stroke="#000" stroke-opacity=".1" stroke-width="1.5"/><g transform="translate(877.70 863.00)" clip-path="url(#ci)"><use href="#tA"/></g><rect x="1041.70" y="856.50" width="155.60" height="132.30" fill="none" stroke="#000" stroke-opacity=".4" stroke-width="1"/><rect x="1042.95" y="857.75" width="153.10" height="129.80" fill="#000" stroke="#c2bc00" stroke-width="1.5"/><path d="M1042.20 857.75 H1196.80" stroke="#000" stroke-opacity=".3" stroke-width="1.5"/><path d="M1042.95 857.00 V988.30" stroke="#000" stroke-opacity=".1" stroke-width="1.5"/><g transform="translate(1059.50 863.00)" clip-path="url(#ci)"><use href="#tB"/></g><rect x="1223.50" y="856.50" width="155.60" height="132.30" fill="none" stroke="#000" stroke-opacity=".4" stroke-width="1"/><rect x="1224.75" y="857.75" width="153.10" height="129.80" fill="#000" stroke="#c2bc00" stroke-width="1.5"/><path d="M1224.00 857.75 H1378.60" stroke="#000" stroke-opacity=".3" stroke-width="1.5"/><path d="M1224.75 857.00 V988.30" stroke="#000" stroke-opacity=".1" stroke-width="1.5"/><g transform="translate(1241.30 863.00)" clip-path="url(#ci)"><use href="#tD"/></g></svg>
<div class="a" style="left:297px;top:111px;width:1246px;height:856px;overflow:hidden">
<div class="t" style="left:18.00px;top:155.70px;line-height:20px;height:20px;font-size:13.5px;color:#e6e6e6;transform:scaleX(.98)">2025-07-04 19-23-56.192</div>
<div class="t" style="left:199.60px;top:155.70px;line-height:20px;height:20px;font-size:13.5px;color:#e6e6e6;transform:scaleX(.98)">2025-07-04 19-23-59.515</div>
<div class="t" style="left:381.40px;top:155.70px;line-height:20px;height:20px;font-size:13.5px;color:#e6e6e6;transform:scaleX(.98)">2025-07-04 19-25-01.716</div>
<div class="t" style="left:563.20px;top:155.70px;line-height:20px;height:20px;font-size:13.5px;color:#e6e6e6;transform:scaleX(.98)">2025-07-04 19-25-02.615</div>
<div class="t" style="left:745.00px;top:155.70px;line-height:20px;height:20px;font-size:13.5px;color:#e6e6e6;transform:scaleX(.98)">2025-07-04 19-25-03.408</div>
<div class="t" style="left:926.80px;top:155.70px;line-height:20px;height:20px;font-size:13.5px;color:#e6e6e6;transform:scaleX(.98)">2025-07-04 19-25-08.753</div>
<div class="t" style="left:18.00px;top:337.50px;line-height:20px;height:20px;font-size:13.5px;color:#e6e6e6;transform:scaleX(.98)">2025-07-04 19-25-09.709</div>
<div class="t" style="left:199.60px;top:337.50px;line-height:20px;height:20px;font-size:13.5px;color:#e6e6e6;transform:scaleX(.98)">2025-07-04 19-25-10.634</div>
<div class="t" style="left:381.40px;top:337.50px;line-height:20px;height:20px;font-size:13.5px;color:#e6e6e6;transform:scaleX(.98)">2025-07-04 19-25-11.607</div>
<div class="t" style="left:563.20px;top:337.50px;line-height:20px;height:20px;font-size:13.5px;color:#e6e6e6;transform:scaleX(.98)">2025-07-04 19-25-12.480</div>
<div class="t" style="left:745.00px;top:337.50px;line-height:20px;height:20px;font-size:13.5px;color:#e6e6e6;transform:scaleX(.98)">2025-07-04 19-25-13.428</div>
<div class="t" style="left:926.80px;top:337.50px;line-height:20px;height:20px;font-size:13.5px;color:#e6e6e6;transform:scaleX(.98)">2025-07-04 19-25-27.675</div>
<div class="t" style="left:18.00px;top:519.30px;line-height:20px;height:20px;font-size:13.5px;color:#e6e6e6;transform:scaleX(.98)">2025-07-04 19-25-28.645</div>
<div class="t" style="left:199.60px;top:519.30px;line-height:20px;height:20px;font-size:13.5px;color:#e6e6e6;transform:scaleX(.98)">2025-07-04 19-25-29.536</div>
<div class="t" style="left:381.40px;top:519.30px;line-height:20px;height:20px;font-size:13.5px;color:#e6e6e6;transform:scaleX(.98)">2025-07-04 19-25-30.448</div>
<div class="t" style="left:563.20px;top:519.30px;line-height:20px;height:20px;font-size:13.5px;color:#e6e6e6;transform:scaleX(.98)">2025-07-04 19-25-31.426</div>
<div class="t" style="left:745.00px;top:519.30px;line-height:20px;height:20px;font-size:13.5px;color:#e6e6e6;transform:scaleX(.98)">2025-07-04 19-26-46.925</div>
<div class="t" style="left:926.80px;top:519.30px;line-height:20px;height:20px;font-size:13.5px;color:#e6e6e6;transform:scaleX(.98)">2025-07-04 19-26-50.338</div>
<div class="t" style="left:18.00px;top:701.10px;line-height:20px;height:20px;font-size:13.5px;color:#e6e6e6;transform:scaleX(.98)">2025-07-04 19-29-49.048</div>
<div class="t" style="left:199.60px;top:701.10px;line-height:20px;height:20px;font-size:13.5px;color:#e6e6e6;transform:scaleX(.98)">2025-07-04 19-29-52.585</div>
<div class="t" style="left:381.40px;top:701.10px;line-height:20px;height:20px;font-size:13.5px;color:#e6e6e6;transform:scaleX(.98)">2025-07-04 19-32-49.130</div>
<div class="t" style="left:563.20px;top:701.10px;line-height:20px;height:20px;font-size:13.5px;color:#e6e6e6;transform:scaleX(.98)">2025-07-04 19-35-38.890</div>
<div class="t" style="left:745.00px;top:701.10px;line-height:20px;height:20px;font-size:13.5px;color:#e6e6e6;transform:scaleX(.98)">2025-07-04 19-38-29.104</div>
<div class="t" style="left:926.80px;top:701.10px;line-height:20px;height:20px;font-size:13.5px;color:#e6e6e6;transform:scaleX(.98)">2025-07-04 19-38-32.442</div>
</div>
<div class="a" style="left:1542.7px;top:111px;width:11px;height:856px;border-radius:5.5px;background:#4b4b4b"></div>
<div class="a" style="left:1542.7px;top:111px;width:11px;height:798px;border-radius:5.5px;background:#666"></div>
<div class="pn" style="left:1559.8px;top:60.3px;width:50.3px;height:907.3px"></div>
<div class="btn" style="left:1567.8px;top:68px;width:34.5px;height:31px;background:#009688;"><svg width="34.5" height="31" viewBox="1567.8 68 34.5 31"><path d="M1574.4 73.5 H1595.6 C1595.6 79.5 1592 83 1588 84 V94 H1582.8 V84.2 C1578 83 1574.4 79.5 1574.4 73.5Z" fill="none" stroke="#f4f4f4" stroke-linecap="round" stroke-linejoin="round" stroke-width="1.7"/><path d="M1577.6 76.5 C1578.2 79.2 1580 80.6 1582.4 81.2" fill="none" stroke="#f4f4f4" stroke-linecap="round" stroke-linejoin="round" stroke-width="1.1"/><path d="M1581.2 85.9 L1575.2 89.6 L1581.2 93.6" fill="none" stroke="#f4f4f4" stroke-linecap="round" stroke-linejoin="round" stroke-width="1.7"/><path d="M1583.9 84 V93.4" fill="none" stroke="#f4f4f4" stroke-linecap="round" stroke-linejoin="round" stroke-width="1" opacity=".7"/></svg></div>
<div class="btn" style="left:1567.8px;top:104px;width:34.5px;height:31px;"><svg width="34.5" height="31" viewBox="1567.8 104 34.5 31"><circle cx="1585" cy="119.6" r="5.6" fill="none" stroke="#f4f4f4" stroke-linecap="round" stroke-linejoin="round" stroke-width="1.8"/><path d="M1593.10 119.60 L1595.60 119.60" fill="none" stroke="#f4f4f4" stroke-linecap="round" stroke-linejoin="round" stroke-width="1.8"/><path d="M1590.73 125.33 L1592.50 127.10" fill="none" stroke="#f4f4f4" stroke-linecap="round" stroke-linejoin="round" stroke-width="1.8"/><path d="M1585.00 127.70 L1585.00 130.20" fill="none" stroke="#f4f4f4" stroke-linecap="round" stroke-linejoin="round" stroke-width="1.8"/><path d="M1579.27 125.33 L1577.50 127.10" fill="none" stroke="#f4f4f4" stroke-linecap="round" stroke-linejoin="round" stroke-width="1.8"/><path d="M1576.90 119.60 L1574.40 119.60" fill="none" stroke="#f4f4f4" stroke-linecap="round" stroke-linejoin="round" stroke-width="1.8"/><path d="M1579.27 113.87 L1577.50 112.10" fill="none" stroke="#f4f4f4" stroke-linecap="round" stroke-linejoin="round" stroke-width="1.8"/><path d="M1585.00 111.50 L1585.00 109.00" fill="none" stroke="#f4f4f4" stroke-linecap="round" stroke-linejoin="round" stroke-width="1.8"/><path d="M1590.73 113.87 L1592.50 112.10" fill="none" stroke="#f4f4f4" stroke-linecap="round" stroke-linejoin="round" stroke-width="1.8"/></svg></div>
<div class="btn" style="left:1567.8px;top:140.1px;width:34.5px;height:31px;"><svg width="34.5" height="31" viewBox="1567.8 140.1 34.5 31"><circle cx="1585" cy="155.5" r="9.3" fill="none" stroke="#f4f4f4" stroke-linecap="round" stroke-linejoin="round" stroke-width="1.4"/><path d="M1585.3 145.9 A9.6 9.6 0 0 0 1585.3 165.1Z" fill="#f4f4f4"/></svg></div>
<div class="btn" style="left:1567.8px;top:787.9px;width:34.5px;height:31px;"><svg width="34.5" height="31" viewBox="1567.8 787.9 34.5 31"><rect x="1576.5" y="793.6" width="17.3" height="3.7" rx="1.2" fill="none" stroke="#f4f4f4" stroke-linecap="round" stroke-linejoin="round" stroke-width="1.9"/><path d="M1585.1 802.1 L1593.2 812.9 H1577Z" fill="none" stroke="#f4f4f4" stroke-linecap="round" stroke-linejoin="round" stroke-width="2"/></svg></div>
<div class="btn" style="left:1567.8px;top:826.7px;width:34.5px;height:31px;"><svg width="34.5" height="31" viewBox="1567.8 826.7 34.5 31"><path d="M1585 834.6 L1594.6 849.3 H1575.5Z" fill="none" stroke="#f4f4f4" stroke-linecap="round" stroke-linejoin="round" stroke-width="2"/></svg></div>
<div class="t " style="top:864.90px;line-height:20px;height:20px;font-size:13.5px;color:#e0e0e0;left:1435.20px;width:300px;text-align:center;transform-origin:50% 50%;transform:scaleX(0.95);">1/8</div>
<div class="btn" style="left:1567.8px;top:890.4px;width:34.5px;height:31px;"><svg width="34.5" height="31" viewBox="1567.8 890.4 34.5 31"><path d="M1585 913.1 L1594.6 898.5 H1575.5Z" fill="none" stroke="#f4f4f4" stroke-linecap="round" stroke-linejoin="round" stroke-width="2"/></svg></div>
<div class="btn" style="left:1567.8px;top:929px;width:34.5px;height:31px;"><svg width="34.5" height="31" viewBox="1567.8 929 34.5 31"><rect x="1576.5" y="951" width="17.3" height="3.7" rx="1.2" fill="none" stroke="#f4f4f4" stroke-linecap="round" stroke-linejoin="round" stroke-width="1.9"/><path d="M1585.1 946.3 L1593.2 935.6 H1577Z" fill="none" stroke="#f4f4f4" stroke-linecap="round" stroke-linejoin="round" stroke-width="2"/></svg></div>
<div class="a" style="left:0;top:968px;width:1612px;height:6px;background:linear-gradient(#303030,#3a3a3a)"></div>
<div class="a" style="left:0;top:973px;width:1612px;height:34px;background:#3d3d3d"></div>
<div class="t " style="top:982.00px;line-height:20px;height:20px;font-size:12px;color:#e6e6e6;left:1175.60px;">内存:</div>
<div class="bar" style="left:1216.7px;top:984.2px;width:86.4px"><i style="width:41.5px"></i></div>
<div class="t " style="top:981.70px;line-height:20px;height:20px;font-size:13.5px;color:#f0f0f0;left:1109.90px;width:300px;text-align:center;transform-origin:50% 50%;transform:scaleX(0.93);">48%</div>
<div class="t " style="top:982.00px;line-height:20px;height:20px;font-size:12px;color:#e6e6e6;left:1309.20px;">显存:</div>
<div class="bar" style="left:1341.2px;top:984.2px;width:85.8px"><i style="width:20.6px"></i></div>
<div class="t " style="top:981.70px;line-height:20px;height:20px;font-size:13.5px;color:#f0f0f0;left:1234.10px;width:300px;text-align:center;transform-origin:50% 50%;transform:scaleX(0.93);">24%</div>
<div class="t " style="top:982.00px;line-height:20px;height:20px;font-size:12px;color:#e6e6e6;left:1433.60px;">已标注的图像:</div>
<div class="bar" style="left:1520.7px;top:984.2px;width:86.3px"><i style="width:55.2px"></i></div>
<div class="t " style="top:981.70px;line-height:20px;height:20px;font-size:13.5px;color:#f0f0f0;left:1413.85px;width:300px;text-align:center;transform-origin:50% 50%;transform:scaleX(0.93);">64%</div>
</body></html>
